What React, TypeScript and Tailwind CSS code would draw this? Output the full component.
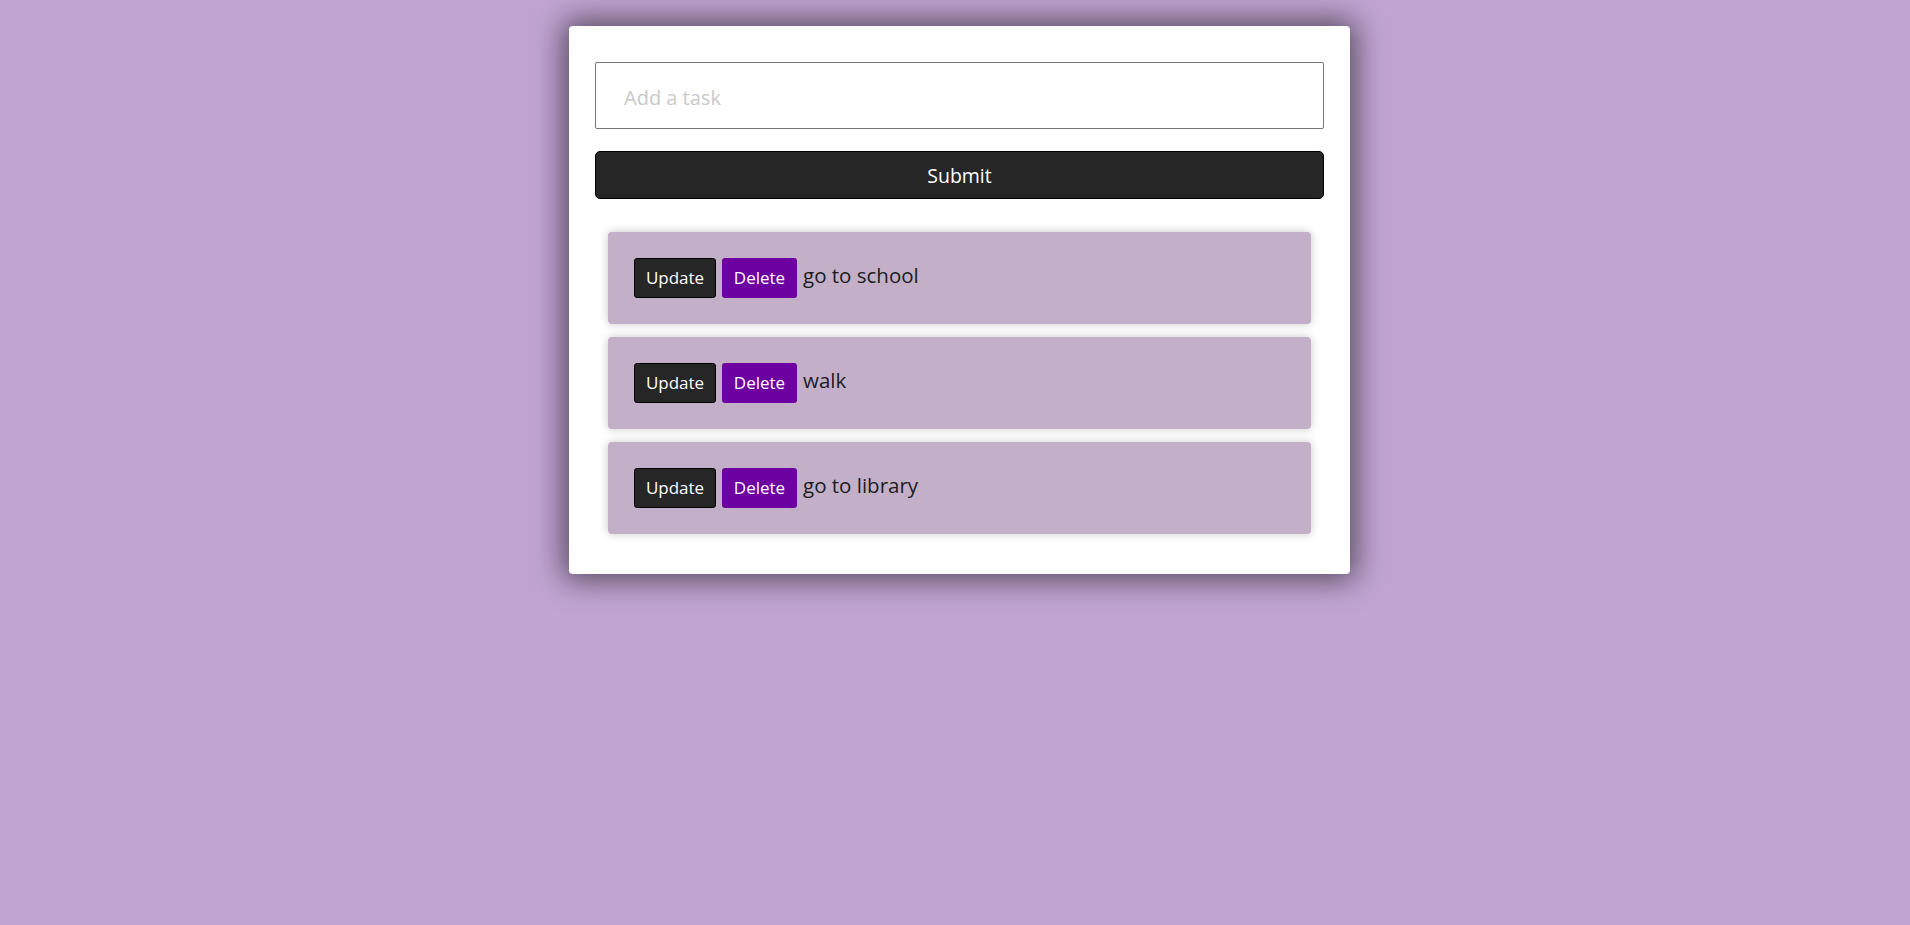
import React from "react";

const tasks = ["go to school", "walk", "go to library"];

export default function App() {
  return (
    <div
      className="min-h-screen w-full bg-[#c1a4d2] pt-[26px] pl-[9px]"
      style={{ fontFamily: '"Open Sans", "Noto Sans", sans-serif' }}
    >
      <div className="mx-auto w-[781px] rounded-[4px] bg-white px-[26px] pt-[36px] pb-[40px] shadow-[0_0_30px_6px_rgba(0,0,0,0.55)]">
        <input
          type="text"
          placeholder="Add a task"
          className="block h-[67px] w-full rounded-[2px] border border-[#767676] bg-white pl-[28px] pt-[4px] text-[20px] text-[#222] outline-none placeholder:text-[#c9c9c9]"
        />
        <button className="mt-[22px] block h-[48px] w-full rounded-[5px] border border-black bg-[#262626] pt-[2px] text-[19.5px] text-white">
          Submit
        </button>
        <div className="mt-[33px] flex flex-col gap-[13px] px-[13px]">
          {tasks.map((t) => (
            <div
              key={t}
              className="flex h-[92px] items-center rounded-[4px] bg-[#c3b0c8] px-[26px] shadow-[0_0_10px_rgba(0,0,0,0.22)]"
            >
              <button className="h-[40px] w-[82px] rounded-[3px] border border-black bg-[#262626] text-[17px] text-white">
                Update
              </button>
              <button className="ml-[6px] h-[40px] w-[75px] rounded-[3px] bg-[#6d00a0] text-[17px] text-white">
                Delete
              </button>
              <span className="ml-[6px] pb-[6px] text-[20.5px] text-[#1c1c1c]">{t}</span>
            </div>
          ))}
        </div>
      </div>
    </div>
  );
}
